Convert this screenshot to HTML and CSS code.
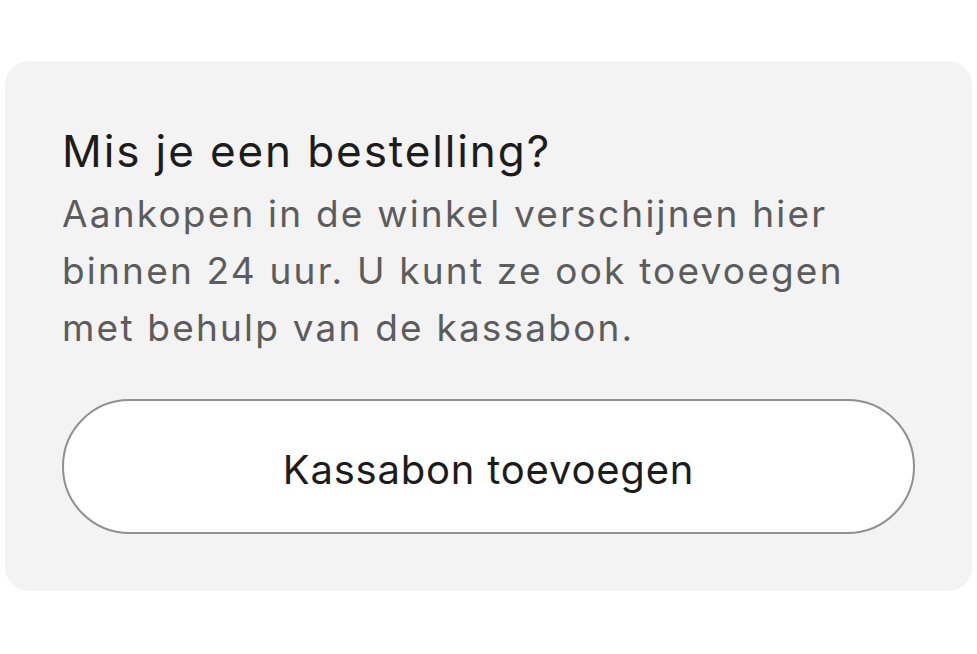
FILE: index.html
```html
<!DOCTYPE html>
<html lang="nl">
<head>
  <meta charset="UTF-8">
  <title>Mis je een bestelling?</title>
  <meta name="viewport" content="width=device-width, initial-scale=1">
  <link rel="stylesheet" href="styles.css">
</head>
<body>
  <section class="receipt-card">
    <h2 class="receipt-title">Mis je een bestelling?</h2>
    <p class="receipt-text">Aankopen in de winkel verschijnen hier binnen 24 uur. U kunt ze ook toevoegen met behulp van de kassabon.</p>
    <button class="receipt-btn">Kassabon toevoegen</button>
  </section>
</body>
</html>
```

FILE: styles.css
```css
* { box-sizing: border-box; margin: 0; padding: 0; }
body { font-family: Inter, 'Noto Sans', sans-serif; background: #fff; padding: 61px 5px; }
.receipt-card { background: #f3f3f3; border-radius: 24px; padding: 62px 57px 57px; display: flex; flex-direction: column; }
.receipt-title { font-size: 44px; font-weight: 400; color: #1c1c1c; line-height: 56px; letter-spacing: 1.9px; }
.receipt-text { font-size: 37px; color: #5c5c5c; line-height: 57px; margin-top: 6px; letter-spacing: 2.2px; }
.receipt-btn { margin-top: 43px; height: 135px; padding-top: 5px; border: 2.5px solid #909090; border-radius: 68px; background: #fff; color: #1c1c1c; font-family: inherit; font-size: 40px; letter-spacing: 0.8px; cursor: pointer; }
```
